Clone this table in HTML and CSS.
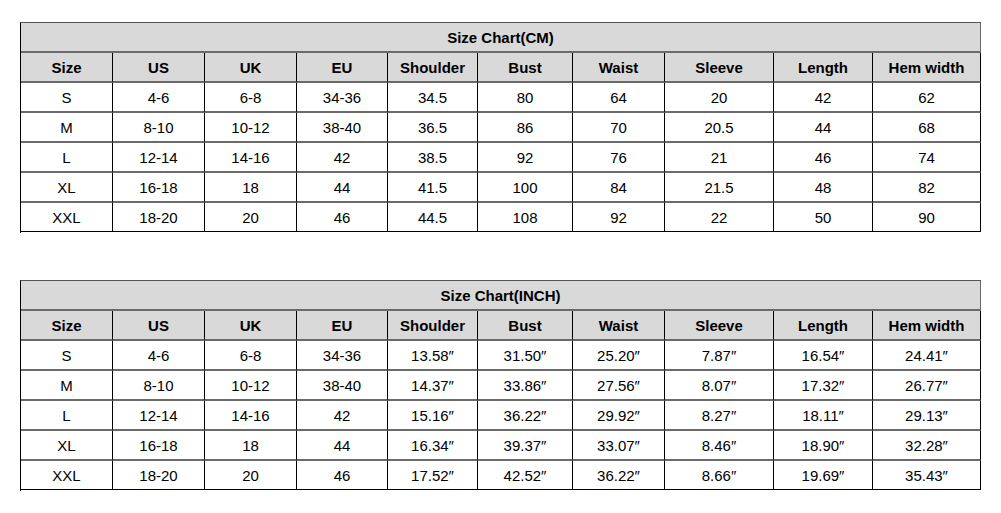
FILE: index.html
```html
<!DOCTYPE html>
<html>
<head>
<meta charset="utf-8">
<link rel="stylesheet" href="styles.css">
</head>
<body>
<div class="page">
  <div class="chart">
    <div class="cell title">Size Chart(CM)</div>
    <div class="cell head">Size</div><div class="cell head">US</div><div class="cell head">UK</div><div class="cell head">EU</div><div class="cell head">Shoulder</div><div class="cell head">Bust</div><div class="cell head">Waist</div><div class="cell head">Sleeve</div><div class="cell head">Length</div><div class="cell head">Hem width</div>
    <div class="cell">S</div><div class="cell">4-6</div><div class="cell">6-8</div><div class="cell">34-36</div><div class="cell">34.5</div><div class="cell">80</div><div class="cell">64</div><div class="cell">20</div><div class="cell">42</div><div class="cell">62</div>
    <div class="cell">M</div><div class="cell">8-10</div><div class="cell">10-12</div><div class="cell">38-40</div><div class="cell">36.5</div><div class="cell">86</div><div class="cell">70</div><div class="cell">20.5</div><div class="cell">44</div><div class="cell">68</div>
    <div class="cell">L</div><div class="cell">12-14</div><div class="cell">14-16</div><div class="cell">42</div><div class="cell">38.5</div><div class="cell">92</div><div class="cell">76</div><div class="cell">21</div><div class="cell">46</div><div class="cell">74</div>
    <div class="cell">XL</div><div class="cell">16-18</div><div class="cell">18</div><div class="cell">44</div><div class="cell">41.5</div><div class="cell">100</div><div class="cell">84</div><div class="cell">21.5</div><div class="cell">48</div><div class="cell">82</div>
    <div class="cell last">XXL</div><div class="cell last">18-20</div><div class="cell last">20</div><div class="cell last">46</div><div class="cell last">44.5</div><div class="cell last">108</div><div class="cell last">92</div><div class="cell last">22</div><div class="cell last">50</div><div class="cell last">90</div>
  </div>
  <div class="chart second">
    <div class="cell title">Size Chart(INCH)</div>
    <div class="cell head">Size</div><div class="cell head">US</div><div class="cell head">UK</div><div class="cell head">EU</div><div class="cell head">Shoulder</div><div class="cell head">Bust</div><div class="cell head">Waist</div><div class="cell head">Sleeve</div><div class="cell head">Length</div><div class="cell head">Hem width</div>
    <div class="cell">S</div><div class="cell">4-6</div><div class="cell">6-8</div><div class="cell">34-36</div><div class="cell">13.58″</div><div class="cell">31.50″</div><div class="cell">25.20″</div><div class="cell">7.87″</div><div class="cell">16.54″</div><div class="cell">24.41″</div>
    <div class="cell">M</div><div class="cell">8-10</div><div class="cell">10-12</div><div class="cell">38-40</div><div class="cell">14.37″</div><div class="cell">33.86″</div><div class="cell">27.56″</div><div class="cell">8.07″</div><div class="cell">17.32″</div><div class="cell">26.77″</div>
    <div class="cell">L</div><div class="cell">12-14</div><div class="cell">14-16</div><div class="cell">42</div><div class="cell">15.16″</div><div class="cell">36.22″</div><div class="cell">29.92″</div><div class="cell">8.27″</div><div class="cell">18.11″</div><div class="cell">29.13″</div>
    <div class="cell">XL</div><div class="cell">16-18</div><div class="cell">18</div><div class="cell">44</div><div class="cell">16.34″</div><div class="cell">39.37″</div><div class="cell">33.07″</div><div class="cell">8.46″</div><div class="cell">18.90″</div><div class="cell">32.28″</div>
    <div class="cell last">XXL</div><div class="cell last">18-20</div><div class="cell last">20</div><div class="cell last">46</div><div class="cell last">17.52″</div><div class="cell last">42.52″</div><div class="cell last">36.22″</div><div class="cell last">8.66″</div><div class="cell last">19.69″</div><div class="cell last">35.43″</div>
  </div>
</div>
</body>
</html>
```

FILE: styles.css
```css
html, body {
  margin: 0;
  padding: 0;
  background: #fff;
}
.page {
  padding: 22px 0 0 20px;
  font-family: "Liberation Sans", Arial, sans-serif;
  font-size: 15px;
  color: #000;
}
.chart {
  display: grid;
  grid-template-columns: 92px 92px 92px 91px 90px 95px 92px 109px 99px 108px;
  grid-auto-rows: 30px;
  width: 960px;
  border-left: 1px solid #000;
  border-top: 1px solid #555;
}
.second {
  margin-top: 47px;
}
.cell {
  box-sizing: border-box;
  display: flex;
  align-items: center;
  justify-content: center;
  border-right: 1px solid #000;
  border-bottom: 2px solid #6a6a6a;
  white-space: nowrap;
}
.title {
  grid-column: 1 / -1;
  background: #d9d9d9;
  font-weight: bold;
  border-right: 1px solid #6a6a6a;
}
.head {
  background: #d9d9d9;
  font-weight: bold;
}
.last {
  border-bottom: 1px solid #000;
  height: 29px;
}
```
